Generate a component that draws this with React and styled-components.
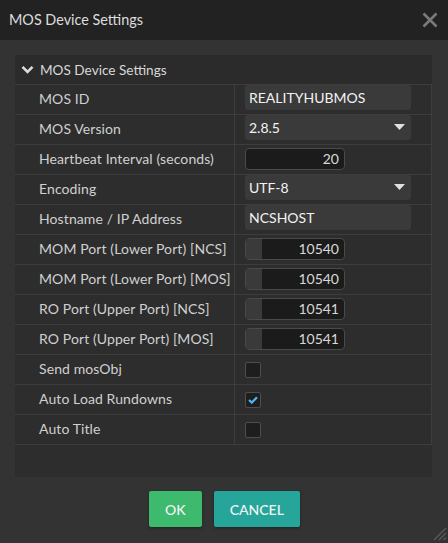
import React from "react";
import styled, { createGlobalStyle } from "styled-components";

const Global = createGlobalStyle`
  html, body { margin: 0; padding: 0; background: #333; }
  body { font-family: "Lato", "Noto Sans", sans-serif; }
  * { box-sizing: border-box; }
`;

const Dialog = styled.div`
  width: 448px;
  height: 543px;
  background: #333333;
  display: flex;
  flex-direction: column;
  position: relative;
  color: #d6d6d6;
`;

const TitleBar = styled.div`
  height: 40px;
  background: #222222;
  display: flex;
  align-items: center;
  justify-content: space-between;
  padding: 0 9px 1px 9px;
  font-size: 14.4px;
  color: #dcdcdc;
`;

const Close = styled.button`
  width: 18px;
  height: 18px;
  padding: 0;
  border: 0;
  background: transparent;
  display: flex;
  align-items: center;
  justify-content: center;
  cursor: pointer;
`;

const Body = styled.div`
  flex: 1;
  display: flex;
  flex-direction: column;
  padding: 15px 16px 0 15px;
`;

const Panel = styled.div`
  background: #2d2d2d;
  height: 422px;
  display: flex;
  flex-direction: column;
`;

const PanelHeader = styled.div`
  height: 29px;
  display: flex;
  align-items: center;
  gap: 6px;
  padding-left: 6px;
  font-size: 13.6px;
  color: #d8d8d8;
  background: #2b2b2b;
`;

const Table = styled.div`
  display: flex;
  flex-direction: column;
  border-bottom: 1px solid #3d3d3d;
  border-right: 1px solid #3d3d3d;
`;

const Row = styled.div`
  height: 30px;
  display: grid;
  grid-template-columns: 220px 1fr;
  border-top: 1px solid #3d3d3d;
`;

const Label = styled.div`
  border-right: 1px solid #3d3d3d;
  padding-left: 24px;
  display: flex;
  align-items: center;
  font-size: 14px;
  letter-spacing: 0.1px;
  color: #d0d0d0;
  padding-bottom: 2px;
`;

const Cell = styled.div`
  display: flex;
  align-items: center;
  padding-left: 10px;
`;

const TextBox = styled.div`
  align-self: flex-start;
  width: 166px;
  height: 25px;
  background: #3a3a3a;
  border-radius: 3px;
  display: flex;
  align-items: center;
  justify-content: space-between;
  padding: 0 6px 1px 4px;
  font-size: 14px;
  color: #f2f2f2;
`;

const NumberBox = styled.div`
  width: 100px;
  height: 22px;
  margin-bottom: 1px;
  background: #1b1b1b;
  border: 1px solid #4a4a4a;
  border-radius: 4px;
  display: flex;
  overflow: hidden;
  font-size: 14px;
  color: #d8d8d8;
`;

const Fill = styled.div`
  width: ${(p) => p.$w}px;
  background: #3a3a3a;
  flex: none;
`;

const NumberValue = styled.div`
  flex: 1;
  display: flex;
  align-items: center;
  justify-content: flex-end;
  padding-right: 5px;
  padding-bottom: 1px;
`;

const Check = styled.div`
  width: 16px;
  height: 16px;
  margin-top: 1px;
  border: 1px solid #4e4e4e;
  border-radius: 2px;
  background: #1e1e1e;
  display: flex;
  align-items: center;
  justify-content: center;
`;

const Footer = styled.div`
  display: flex;
  justify-content: center;
  gap: 12px;
  padding-top: 14px;
  padding-left: 2px;
`;

const Button = styled.button`
  height: 36px;
  padding: 0 ${(p) => p.$pad}px;
  border: 0;
  border-radius: 2px;
  background: ${(p) => p.$bg};
  color: #f4f4f4;
  font-family: "Lato", "Noto Sans", sans-serif;
  font-size: 14px;
  font-weight: 500;
  box-shadow: 0 1px 3px rgba(0, 0, 0, 0.35);
  cursor: pointer;
`;

const Grip = styled.div`
  position: absolute;
  right: 1px;
  bottom: 2px;
  width: 16px;
  height: 16px;
`;

const Chevron = () => (
  <svg width="13" height="9" viewBox="0 0 13 9">
    <path d="M1.5 1.8 L6.5 6.8 L11.5 1.8" fill="none" stroke="#d8dde2" strokeWidth="2.6" />
  </svg>
);

const Caret = () => (
  <svg width="11" height="6" viewBox="0 0 11 6">
    <path d="M0 0 H11 L5.5 6 Z" fill="#e0e0e0" />
  </svg>
);

const Tick = () => (
  <svg width="10" height="8" viewBox="0 0 10 8">
    <path d="M1 4 L3.8 6.6 L9 1.2" fill="none" stroke="#4fb8ee" strokeWidth="2.2" />
  </svg>
);

const rows = [
  { label: "MOS ID", type: "text", value: "REALITYHUBMOS" },
  { label: "MOS Version", type: "select", value: "2.8.5" },
  { label: "Heartbeat Interval (seconds)", type: "number", value: "20", fill: 0 },
  { label: "Encoding", type: "select", value: "UTF-8" },
  { label: "Hostname / IP Address", type: "text", value: "NCSHOST" },
  { label: "MOM Port (Lower Port) [NCS]", type: "number", value: "10540", fill: 16 },
  { label: "MOM Port (Lower Port) [MOS]", type: "number", value: "10540", fill: 16 },
  { label: "RO Port (Upper Port) [NCS]", type: "number", value: "10541", fill: 16 },
  { label: "RO Port (Upper Port) [MOS]", type: "number", value: "10541", fill: 16 },
  { label: "Send mosObj", type: "check", value: false },
  { label: "Auto Load Rundowns", type: "check", value: true },
  { label: "Auto Title", type: "check", value: false },
];

const Control = ({ r }) => {
  if (r.type === "text") return <TextBox>{r.value}</TextBox>;
  if (r.type === "select")
    return (
      <TextBox>
        <span>{r.value}</span>
        <Caret />
      </TextBox>
    );
  if (r.type === "number")
    return (
      <NumberBox>
        <Fill $w={r.fill} />
        <NumberValue>{r.value}</NumberValue>
      </NumberBox>
    );
  return <Check>{r.value && <Tick />}</Check>;
};

export default function App() {
  return (
    <>
      <Global />
      <Dialog>
        <TitleBar>
          <span>MOS Device Settings</span>
          <Close aria-label="close">
            <svg width="16" height="16" viewBox="0 0 16 16">
              <path d="M1.5 1.5 L14.5 14.5 M14.5 1.5 L1.5 14.5" stroke="#7a7a7a" strokeWidth="2.6" />
            </svg>
          </Close>
        </TitleBar>
        <Body>
          <Panel>
            <PanelHeader>
              <Chevron />
              <span>MOS Device Settings</span>
            </PanelHeader>
            <Table>
              {rows.map((r) => (
                <Row key={r.label}>
                  <Label>{r.label}</Label>
                  <Cell>
                    <Control r={r} />
                  </Cell>
                </Row>
              ))}
            </Table>
          </Panel>
          <Footer>
            <Button $bg="#3dba6e" $pad={16}>OK</Button>
            <Button $bg="#26a69a" $pad={16}>CANCEL</Button>
          </Footer>
        </Body>
        <Grip>
          <svg width="16" height="16" viewBox="0 0 16 16">
            <path d="M15 3 L3 15 M15 8 L8 15 M15 12.5 L12.5 15" stroke="#5a5a5a" strokeWidth="1.3" />
          </svg>
        </Grip>
      </Dialog>
    </>
  );
}
